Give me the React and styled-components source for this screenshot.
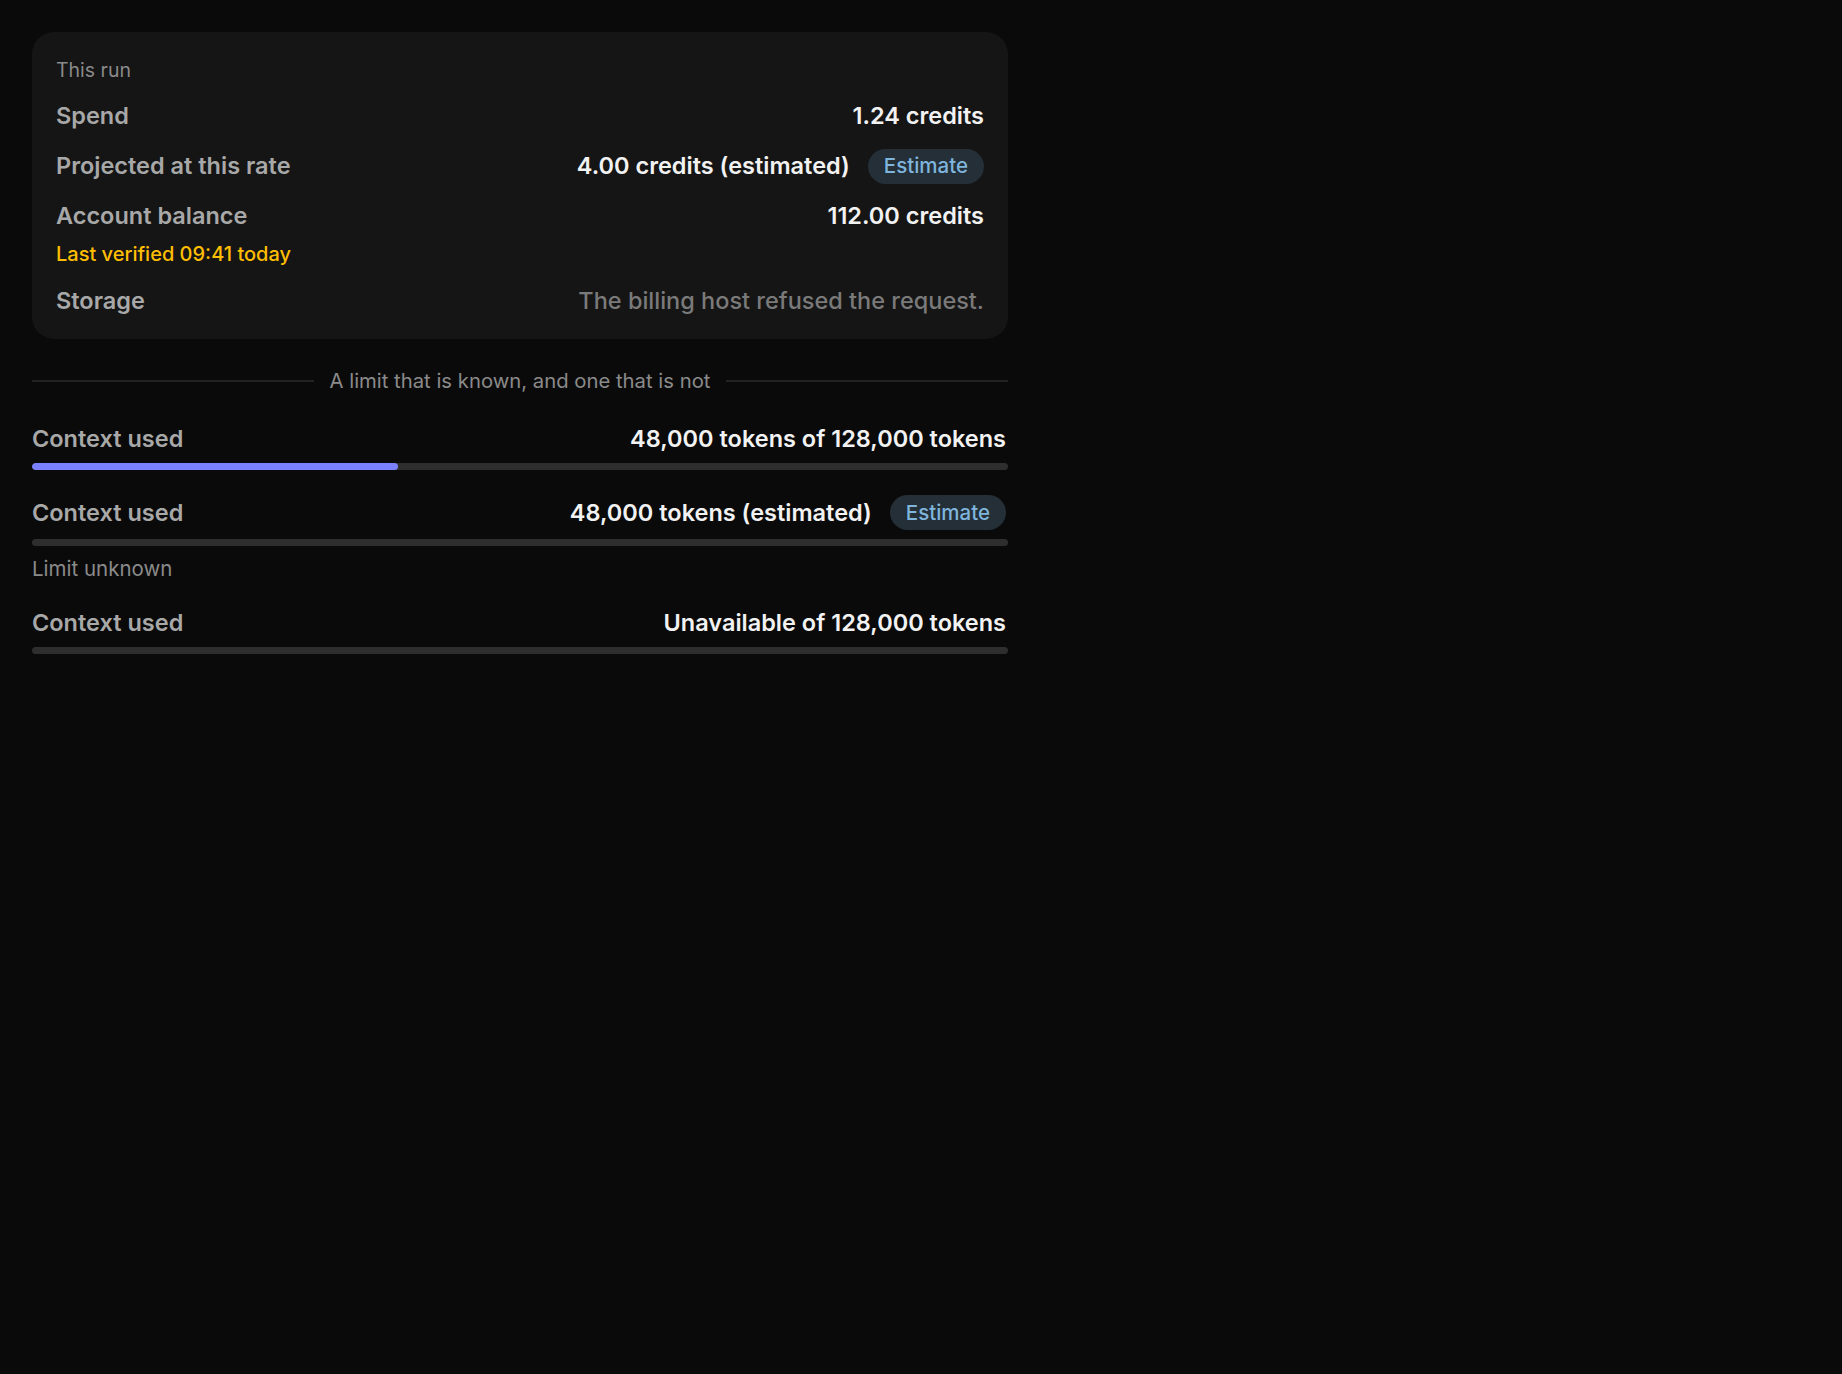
import React from "react";
import { styled, createGlobalStyle } from "styled-components";

const GlobalStyle = createGlobalStyle`
  html, body {
    margin: 0;
    padding: 0;
    background: #0a0a0a;
  }
  body {
    font-family: Inter, "Noto Sans", "Liberation Sans", sans-serif;
    color: #ededed;
    -webkit-font-smoothing: antialiased;
  }
`;

const Page = styled.div`
  min-height: 100vh;
  box-sizing: border-box;
  padding: 32px;
  background: #0a0a0a;
`;

const Column = styled.div`
  width: 976px;
  display: flex;
  flex-direction: column;
`;

const Card = styled.section`
  background: #151515;
  border-radius: 22px;
  padding: 26px 24px 20px;
  display: flex;
  flex-direction: column;
`;

const Caption = styled.div`
  font-size: 19.5px;
  line-height: 24px;
  color: #8a8a8a;
  margin-bottom: 16px;
`;

const Rows = styled.div`
  display: flex;
  flex-direction: column;
  gap: 14px;
`;

const Row = styled.div`
  display: flex;
  align-items: center;
  justify-content: space-between;
  min-height: 36px;
`;

const Label = styled.span`
  font-size: 23.5px;
  font-weight: 600;
  line-height: 30px;
  color: #a8a8a8;
`;

const Value = styled.span`
  display: flex;
  align-items: center;
  gap: 18px;
  font-size: 23.5px;
  line-height: 30px;
  color: ${(p) => (p.$muted ? "#7a7a7a" : "#f2f2f2")};
  font-weight: ${(p) => (p.$muted ? 500 : 600)};
`;

const Badge = styled.span`
  display: inline-flex;
  align-items: center;
  height: 35px;
  padding: 0 16px;
  border-radius: 999px;
  background: #242f38;
  color: #7fb5dc;
  font-size: 20.5px;
  font-weight: 500;
`;

const Group = styled.div`
  display: flex;
  flex-direction: column;
`;

const Note = styled.div`
  font-size: 20px;
  line-height: 25px;
  font-weight: 500;
  color: #ffbf00;
  margin: 8px 0 2px;
`;

const Divider = styled.div`
  display: flex;
  align-items: center;
  gap: 16px;
  margin: 29px 0 30px;
  font-size: 20.3px;
  line-height: 26px;
  color: #8a8a8a;
  white-space: nowrap;

  &::before,
  &::after {
    content: "";
    flex: 1;
    height: 2px;
    background: #222;
  }
`;

const Meter = styled.div`
  display: flex;
  flex-direction: column;
  margin-bottom: ${(p) => p.$gap || 0}px;
`;

const MeterHead = styled.div`
  display: flex;
  align-items: center;
  justify-content: space-between;
  padding-right: 2px;
`;

const Track = styled.div`
  margin-top: 9px;
  height: 7px;
  border-radius: 4px;
  background: #2e2e2e;
  overflow: hidden;
`;

const Fill = styled.div`
  height: 100%;
  border-radius: 4px;
  background: #7b80ff;
`;

const Hint = styled.div`
  margin-top: 10px;
  font-size: 20.5px;
  line-height: 26px;
  color: #8a8a8a;
`;

const meters = [
  { value: "48,000 tokens of 128,000 tokens", used: 48000, limit: 128000 },
  { value: "48,000 tokens (estimated)", estimate: true, hint: "Limit unknown" },
  { value: "Unavailable of 128,000 tokens" },
];

export default function App() {
  return (
    <>
      <GlobalStyle />
      <Page>
        <Column>
          <Card>
            <Caption>This run</Caption>
            <Rows>
              <Row>
                <Label>Spend</Label>
                <Value>1.24 credits</Value>
              </Row>
              <Row>
                <Label>Projected at this rate</Label>
                <Value>
                  4.00 credits (estimated)
                  <Badge>Estimate</Badge>
                </Value>
              </Row>
              <Group>
                <Row>
                  <Label>Account balance</Label>
                  <Value>112.00 credits</Value>
                </Row>
                <Note>Last verified 09:41 today</Note>
              </Group>
              <Row>
                <Label>Storage</Label>
                <Value $muted>The billing host refused the request.</Value>
              </Row>
            </Rows>
          </Card>

          <Divider>A limit that is known, and one that is not</Divider>

          {meters.map((m, i) => (
            <Meter key={i} $gap={i === 0 ? 25 : i === 1 ? 26 : 0}>
              <MeterHead>
                <Label>Context used</Label>
                <Value>
                  {m.value}
                  {m.estimate && <Badge>Estimate</Badge>}
                </Value>
              </MeterHead>
              <Track>
                {m.limit && (
                  <Fill style={{ width: `${(m.used / m.limit) * 100}%` }} />
                )}
              </Track>
              {m.hint && <Hint>{m.hint}</Hint>}
            </Meter>
          ))}
        </Column>
      </Page>
    </>
  );
}
